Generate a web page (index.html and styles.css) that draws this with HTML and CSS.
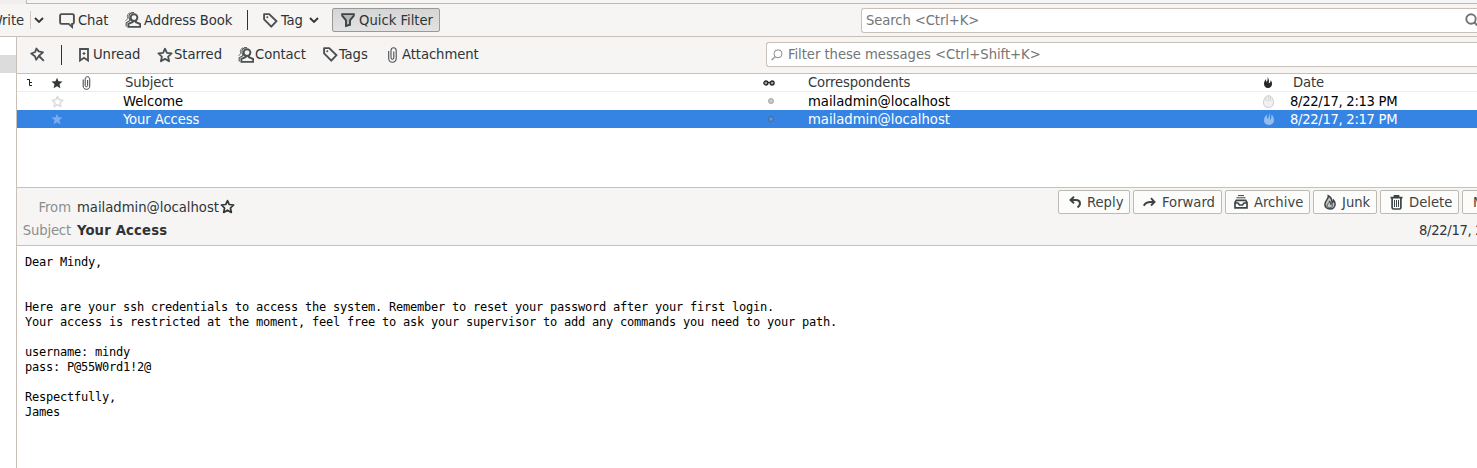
FILE: index.html
```html
<!DOCTYPE html>
<html lang="en">
<head>
<meta charset="utf-8">
<title>Mail</title>
<link rel="stylesheet" href="styles.css">
</head>
<body>
<svg class="defs" width="0" height="0" aria-hidden="true">
  <symbol id="chevron" viewBox="0 0 10 6"><path d="M1 1l4 4 4-4" fill="none" stroke="currentColor" stroke-width="1.8"/></symbol>
  <symbol id="person" viewBox="0 0 16 16"><g fill="none" stroke="currentColor"><circle cx="9" cy="5.6" r="3.400" stroke-width="1.9"/><path d="M7.600 8.800v1.400L3.400 12v2.900h11.800V12l-4.400-1.800V8.800" stroke-width="1.9"/><path d="M9 .7C5.500.3 3.600 2.500 4 5.500c.2 1.500.9 2.300 1.200 3L1.200 10.900v3.500" stroke-width="1.100"/><path d="M5 .8C2.800 1.500 1.900 3.500 2.700 6.600L.5 8.900" stroke-width=".8"/></g></symbol>
  <symbol id="tag" viewBox="0 0 15 15"><path d="M1.100 1.100h5.100l7.300 7.100-5.200 5.500L1.100 6.300z" fill="none" stroke="currentColor" stroke-width="1.900" stroke-linejoin="round"/><circle cx="4.300" cy="4.300" r="1" fill="currentColor"/></symbol>
  <symbol id="star" viewBox="0 0 16 16"><path d="M8 1.700l1.900 4.200 4.700.5-3.500 3.200 1 4.700L8 11.900l-4.100 2.400 1-4.700-3.500-3.200 4.700-.5z" fill="none" stroke="currentColor" stroke-width="1.800" stroke-linejoin="round"/></symbol>
  <symbol id="star-solid" viewBox="0 0 12 12"><path d="M6 .7l1.500 3.600 4 .3-3 2.700.9 3.900L6 9.200l-3.400 2 .9-3.900-3-2.700 4-.3z" fill="currentColor"/></symbol>
  <symbol id="clip" viewBox="0 0 9 16"><path d="M.7 4v7.500c0 5 7.500 5 7.500 0V3.800c0-4-5.200-4-5.200 0v7c0 2 2.800 2 2.800 0V4.500" fill="none" stroke="currentColor" stroke-width="1.100"/></symbol>
  <symbol id="flame" viewBox="0 0 10 12"><path d="M3.200 1.500C1 3 0 5 0 7.300 0 10 2 12 5 12s5-2 5-4.700C10 4.800 9 2.600 7.300 1.300c.4 2 .1 3.700-.7 5.200H5.800C6.300 4.500 6.200 2.200 5.300 0c-.1 2.300-.5 4.200-1.500 5.800l-.6-.2C2.900 4.300 2.900 2.800 3.200 1.500z" fill="currentColor"/></symbol>
  <symbol id="egg" viewBox="0 0 11 13"><path d="M3.300 1.500C1.200 3 .5 5.300.5 7.800c0 2.900 2 4.700 5 4.700s5-1.800 5-4.700c0-2.600-.9-5-2.700-6.400C7 .9 6.300.6 5.500.6S4 .9 3.300 1.500z" fill="#f1f1f1" stroke="currentColor" stroke-width=".8"/><path d="M5.600.8c.3 2.200 0 4-.9 5.700M7.600 1.600c.2 1.800 0 3.300-.6 4.800M3.200 1.800c-.5 1.500-.6 2.700-.2 4" fill="none" stroke="currentColor" stroke-width=".7"/></symbol>
</svg>

<div class="tabs"><div class="tab-edge"></div></div>

<div class="toolbar">
  <span class="write">Write</span>
  <i class="sep-light"></i>
  <svg class="chev" width="10" height="6"><use href="#chevron"/></svg>
  <svg class="chat" width="16" height="15" viewBox="0 0 16 15"><path d="M2.600 1.100h10.900c.8 0 1.400.6 1.400 1.400v7c0 .8-.6 1.400-1.400 1.400h-.4v3L9.700 10.900H2.500c-.8 0-1.400-.6-1.400-1.400v-7c0-.8.600-1.400 1.500-1.400z" fill="none" stroke="currentColor" stroke-width="1.900"/></svg>
  <span>Chat</span>
  <svg class="ic" width="16" height="16"><use href="#person"/></svg>
  <span>Address Book</span>
  <i class="sep"></i>
  <svg class="ic" width="15" height="15"><use href="#tag"/></svg>
  <span>Tag</span>
  <svg class="chev" width="10" height="6"><use href="#chevron"/></svg>
  <div class="quick"><svg width="14" height="14" viewBox="0 0 14 14"><path d="M1.200 1.100h11.600v1.600L9 7.300v4.400l-4 1.200V7.300L1.200 2.700z" fill="#b4b6b7" stroke="#3d4446" stroke-width="1.900"/></svg><span>Quick Filter</span></div>
  <div class="field search"><span>Search &lt;Ctrl+K&gt;</span><svg width="15" height="15" viewBox="0 0 15 15"><circle cx="6" cy="6" r="4.700" fill="none" stroke="#747474" stroke-width="1.900"/><path d="M9.300 9.300l4 4" stroke="#747474" stroke-width="2.200"/></svg></div>
</div>

<div class="main">
  <aside class="folders"><div class="folder-selected"></div></aside>
  <section class="content">
    <div class="filterbar">
      <svg class="ic" width="15" height="15" viewBox="0 0 15 15"><path d="M6.400 1.500l2.300 2.900 4.300 1-4 3.300-2.800 4-1.300-3.500L1.200 6.500l4-1.500z" fill="none" stroke="currentColor" stroke-width="1.800" stroke-linejoin="round"/><path d="M9 9l4.800 4.800" stroke="currentColor" stroke-width="1.900"/></svg>
      <i class="sep"></i>
      <svg class="ic" width="10" height="14" viewBox="0 0 10 14"><path d="M1 1h8v11.500L5 9.800l-4 2.700z" fill="none" stroke="currentColor" stroke-width="1.800"/><path d="M5 4v3M3.500 5.500h3" stroke="currentColor" stroke-width="1.200"/></svg>
      <span>Unread</span>
      <svg class="ic" width="16" height="16"><use href="#star"/></svg>
      <span>Starred</span>
      <svg class="ic" width="16" height="16"><use href="#person"/></svg>
      <span>Contact</span>
      <svg class="ic" width="15" height="15"><use href="#tag"/></svg>
      <span>Tags</span>
      <svg class="ic" width="9" height="16"><use href="#clip"/></svg>
      <span>Attachment</span>
      <div class="field filter"><svg width="12" height="12" viewBox="0 0 12 12"><circle cx="7" cy="4.800" r="4" fill="none" stroke="#8b8b8b"/><path d="M4.200 7.600L.7 11" stroke="#8b8b8b" stroke-width="1.200"/></svg><span>Filter these messages &lt;Ctrl+Shift+K&gt;</span></div>
    </div>

    <div class="list">
      <div class="row head">
        <svg width="7" height="9" viewBox="0 0 7 9"><path d="M0 1.500h2.500v6H5M2.500 4.500H5" fill="none" stroke="#222"/></svg>
        <svg width="12" height="12"><use href="#star-solid"/></svg>
        <svg width="9" height="14"><use href="#clip"/></svg>
        <span class="h-subject">Subject</span>
        <svg class="glasses" width="12" height="6" viewBox="0 0 12 6"><g fill="#9aa0a3" stroke="#25292b" stroke-width="1.300"><circle cx="2.900" cy="3" r="2"/><circle cx="9.100" cy="3" r="2"/></g><path d="M4.500 2.500h3" stroke="#25292b" stroke-width="1.300"/></svg>
        <span>Correspondents</span>
        <svg class="head-flame" width="8" height="11" viewBox="0 0 8 11"><path d="M2.200 2C.8 3.300 0 4.900 0 6.700 0 9.200 1.600 11 4 11s4-1.700 4-4.200c0-1.500-.5-2.700-1.400-3.600C6.600 4.900 6 6 4.700 6.300 5.400 4 4.800 1.700 3.600 0c.2 2.200 0 3.800-.8 5C2 4.100 1.900 3 2.200 2z" fill="#25292b"/></svg>
        <span class="h-date">Date</span>
      </div>
      <div class="row mail">
        <i></i>
        <svg class="pale" width="13" height="13" viewBox="0 0 16 16"><use href="#star"/></svg>
        <i></i>
        <span>Welcome</span>
        <b class="dot"></b>
        <span>mailadmin@localhost</span>
        <svg class="pale-egg" width="11" height="13"><use href="#egg"/></svg>
        <span class="date">8/22/17, 2:13 PM</span>
      </div>
      <div class="row mail selected">
        <i></i>
        <svg class="blue" width="12" height="12"><use href="#star-solid"/></svg>
        <i></i>
        <span class="tight">Your Access</span>
        <b class="dot"></b>
        <span>mailadmin@localhost</span>
        <svg class="blue-egg" width="10" height="12"><use href="#flame"/></svg>
        <span class="date">8/22/17, 2:17 PM</span>
      </div>
    </div>

    <header class="message-head">
      <div class="fields">
        <label>From</label><div class="from"><span>mailadmin@localhost</span><svg width="15" height="15"><use href="#star"/></svg></div>
        <label class="subject-label">Subject</label><strong>Your Access</strong>
      </div>
      <div class="side">
        <div class="actions">
          <button class="reply"><svg width="13" height="13" viewBox="0 0 13 13"><path d="M5 .8L1.500 4 5 7.200M1.800 4H7c5 0 5 5.200 1.500 7.300" fill="none" stroke="currentColor" stroke-width="2"/></svg><span>Reply</span></button>
          <button class="forward"><svg width="13" height="13" viewBox="0 0 13 13"><path d="M8 2.200L11.500 6 8 9.500M11.200 6H7.500C4 6 2.300 7 .8 9.700" fill="none" stroke="currentColor" stroke-width="1.900"/></svg><span>Forward</span></button>
          <button class="archive"><svg width="14" height="14" viewBox="0 0 14 14"><path d="M4 .6h6M2.500 2.800h9" stroke="currentColor" stroke-width="1"/><path d="M2.300 5.300h9.400L13 7.500v5.400H1V7.500zM1.300 8H4l1.500 2h3L10 8h2.700" fill="none" stroke="currentColor" stroke-width="1.700"/></svg><span>Archive</span></button>
          <button class="junk"><svg width="12" height="15" viewBox="0 0 12 15"><path d="M4.300.8c.4 3.400-3.400 4.700-3.400 8.700C.9 12.200 3 14 6 14s5.100-2 5.100-4.800c0-1.700-.6-3-1.500-3.900-.1 1.400-.6 2.200-1.400 2.600C8 4.500 6.900 2 4.300.8z" fill="#c3c5c6" stroke="currentColor" stroke-width="1.500"/><path d="M3 10.500c.3-1.900 2.500-2.200 2.600-4.600 1.300 1.500.9 2.600.9 3.600.7-.2.900-.5 1.200-1 1.300 2.400.2 4.500-1.900 4.500-1.500 0-2.700-1-2.800-2.500z" fill="none" stroke="currentColor" stroke-width="1"/></svg><span>Junk</span></button>
          <button class="delete"><svg width="13" height="15" viewBox="0 0 13 15"><path d="M.5 2.700h12M4.500 2.500V.9h4v1.600M2.100 3v9.500c0 1 .5 1.500 1.400 1.500h6c.9 0 1.400-.5 1.400-1.500V3" fill="none" stroke="currentColor" stroke-width="1.700"/><path d="M4.500 5v7M6.500 5v7M8.500 5v7" stroke="currentColor" stroke-width="1"/></svg><span>Delete</span></button>
          <button class="more"><span>More</span></button>
        </div>
        <div class="when date">8/22/17, 2:17 PM</div>
      </div>
    </header>

<pre class="body">Dear Mindy,


Here are your ssh credentials to access the system. Remember to reset your password after your first login.
Your access is restricted at the moment, feel free to ask your supervisor to add any commands you need to your path.

username: mindy
pass: P@55W0rd1!2@

Respectfully,
James</pre>
  </section>
</div>
</body>
</html>
```

FILE: styles.css
```css
* { box-sizing: border-box; }
html, body { margin: 0; height: 100%; overflow: hidden; }
body {
  display: flex; flex-direction: column;
  width: 1477px; height: 468px;
  background: #fff; color: #2e3436;
  font: 14.67px/18px "DejaVu Sans Condensed", "DejaVu Sans", sans-serif;
  font-stretch: condensed;
  white-space: nowrap;
}
svg { display: block; flex: none; overflow: visible; }
.defs { width: 0; height: 0; }
.tabs { height: 4px; flex: none; background: #f0efed; padding-left: 26px; }
.tab-edge { height: 4px; border-left: 1px solid #bfb8b1; border-bottom: 1px solid #bfb8b1; background: #f6f5f4; }
.toolbar {
  flex: none; height: 33px; background: #f6f5f4; border-bottom: 1px solid #c8c1b9;
  display: grid; align-items: center; overflow: hidden; letter-spacing: -0.1px;
  grid-template-columns: 30px 4px 25px 19px 47px 19px 103px 16px 18px 28px 23px 529px 616px;
}
.write { justify-self: end; padding-right: 6px; }
.sep-light { width: 1px; height: 18px; background: #cfcbc7; }
.sep { width: 1px; height: 20px; background: #2e3436; }
.ic, .chat { color: #4b5052; }
.quick {
  display: flex; align-items: center; width: 108px; height: 24px; padding-left: 8px; gap: 4px; letter-spacing: 0;
  border: 1px solid #999; border-radius: 2px; background: linear-gradient(#d5d5d5, #e2e2e2);
}
.field {
  display: flex; align-items: center; height: 25px; background: #fff; color: #757575;
  border: 1px solid #c9c1b9; border-right: 0; border-radius: 3px 0 0 3px;
}
.search { padding-left: 4px; justify-content: space-between; width: 619px; }
.main { flex: 1; display: flex; min-height: 0; }
.folders { width: 17px; flex: none; border-right: 1px solid #c8c1b9; padding-top: 18px; }
.folder-selected { height: 18px; background: #dcdcdc; }
.content { flex: 1; min-width: 0; display: flex; flex-direction: column; }
.filterbar {
  flex: none; height: 37px; background: #f6f5f4; border-bottom: 1px solid #c8c1b9;
  display: grid; align-items: center; padding: 0 0 1px 13px; letter-spacing: -0.06px;
  grid-template-columns: 31px 18px 14px 64px 17px 64px 17px 68px 16px 49px 14px 364px 711px;
}
.filterbar span { padding-bottom: 2px; }
.filter { padding-left: 4px; gap: 5px; letter-spacing: -0.04px; }
.list { flex: none; height: 113px; background: #fff; }
.row {
  height: 18px; display: grid; align-items: center;
  grid-template-columns: 34px 31px 41px 645px 40px 455px 27px 1fr;
}
.row > :first-child { margin-left: 10px; }
.head { border-bottom: 1px solid #eee; color: #33393b; letter-spacing: -0.14px; }
.head span { line-height: 15px; padding-top: 1px; padding-bottom: 3px; margin: -1px 0; }
.h-subject { padding-left: 2px; }
.h-date { padding-left: 3px; }
.head-flame { margin-left: 1px; }
.glasses { margin-left: -5px; }
.mail { color: #000; }
.date { letter-spacing: -0.32px; }
.tight { letter-spacing: -0.08px; }
.dot { width: 6px; height: 6px; border-radius: 50%; background: #c9c9c9; border: 1px solid #a8a8a8; }
.pale { color: #dadada; }
.pale-egg { color: #c4c4c4; }
.selected { background: #3584e4; color: #fff; }
.blue { color: #78aeee; }
.blue-egg { color: #94bdec; margin-left: 1px; }
.selected .dot { background: #6793c6; border-color: #3c699e; }
.message-head {
  flex: none; height: 59px; background: #f6f5f4; display: flex; justify-content: space-between;
  border-top: 1px solid #c8c1b9; border-bottom: 1px solid #c8c1b9;
}
.fields {
  display: grid; grid-template-columns: 54px auto; column-gap: 6px; grid-template-rows: 23px 23px;
  align-content: start; align-items: center; padding-top: 7px;
}
.fields label { color: #8b8e8f; text-align: right; }
.fields .subject-label { letter-spacing: -0.15px; }
.fields strong { letter-spacing: 0.18px; }
.from { display: flex; align-items: center; gap: 1px; }
.side { width: 419px; overflow: hidden; padding-top: 2px; }
.actions { display: flex; gap: 3px; }
button {
  flex: none; display: flex; align-items: center; height: 24px; margin: 0; padding: 0;
  border: 1px solid #bdb9b5; border-radius: 2px; background: #fcfcfb; color: #3e4446; font: inherit; font-stretch: condensed;
}
.reply { width: 72px; padding-left: 10px; gap: 5px; }
.forward { width: 89px; padding-left: 9px; gap: 6px; }
.archive { width: 85px; padding-left: 8px; gap: 6px; }
.junk { width: 64px; padding-left: 10px; gap: 6px; }
.delete { width: 79px; padding-left: 9px; gap: 6px; }
.more { width: 60px; padding-left: 10px; }
.when { padding: 7px 0 0 361px; }
.body {
  margin: 0; padding: 9px 0 0 8px; color: #000;
  font: 12px/15px "DejaVu Sans Mono", monospace; letter-spacing: -0.224px;
}
```
